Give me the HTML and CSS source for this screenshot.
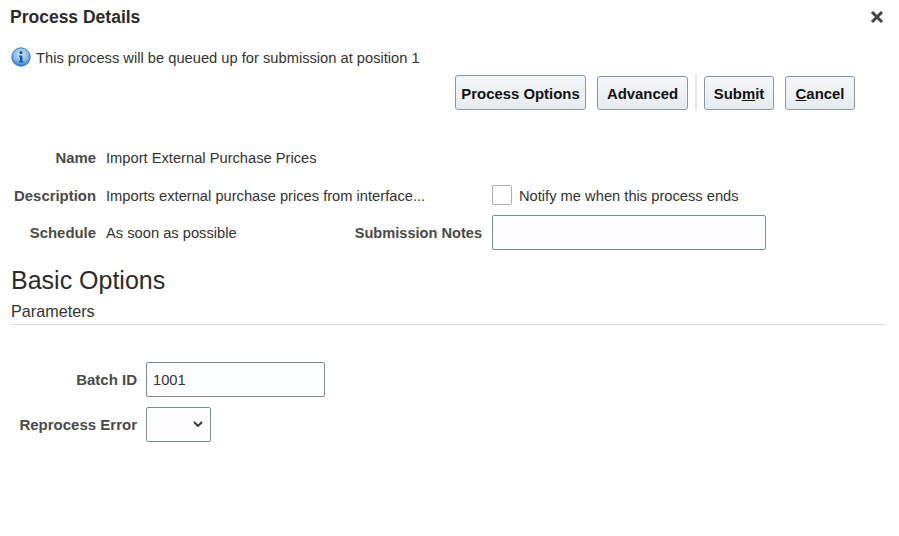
FILE: index.html
```html
<!DOCTYPE html>
<html lang="en">
<head>
    <meta charset="UTF-8">
    <meta name="viewport" content="width=device-width, initial-scale=1.0">
    <title>Process Details</title>
    <link rel="stylesheet" href="styles.css">
</head>
<body>
    <div class="dialog-head">
        <h1>Process Details</h1>
        <svg class="close" width="14" height="14" viewBox="0 0 14 14">
            <path d="M2 2 L12 12 M12 2 L2 12" stroke="#444" stroke-width="3" fill="none"/>
        </svg>
    </div>

    <div class="info">
        <svg width="20" height="20" viewBox="0 0 20 20">
            <defs>
                <radialGradient id="infoFill" cx="50%" cy="35%" r="65%">
                    <stop offset="0" stop-color="#d8ebfb"/>
                    <stop offset="0.6" stop-color="#86bbec"/>
                    <stop offset="1" stop-color="#2f78c8"/>
                </radialGradient>
            </defs>
            <circle cx="10" cy="10" r="9.2" fill="url(#infoFill)" stroke="#3a7cc4" stroke-width="1"/>
            <circle cx="10" cy="5.6" r="1.6" fill="#1b56a8"/>
            <path d="M8 8.4 H11.4 V14 H12.4 V15.4 H7.8 V14 H8.9 V9.8 H8 Z" fill="#1b56a8"/>
        </svg>
        <span class="nudge">This process will be queued up for submission at position 1</span>
    </div>

    <div class="toolbar">
        <button class="options">Process Options</button>
        <button class="advanced">Advanced</button>
        <span class="divider"></span>
        <button class="submit">Sub<u>m</u>it</button>
        <button class="cancel"><u>C</u>ancel</button>
    </div>

    <div class="details">
        <label class="row-name">Name</label>
        <div class="wide row-name">Import External Purchase Prices</div>

        <label class="row-desc nudge">Description</label>
        <div class="wide row-desc nudge">Imports external purchase prices from interface...</div>
        <div class="notify row-desc"><span class="checkbox"></span><span class="nudge">Notify me when this process ends</span></div>

        <label class="row-sched">Schedule</label>
        <div class="row-sched">As soon as possible</div>
        <label class="row-sched notes-label">Submission Notes</label>
        <input class="notes row-sched" type="text">
    </div>

    <h2>Basic Options</h2>
    <div class="section">Parameters</div>

    <div class="params">
        <label>Batch ID</label>
        <input class="batch" type="text" value="1001">
        <label>Reprocess Error</label>
        <div class="select">
            <svg width="10" height="7" viewBox="0 0 10 7">
                <path d="M1 1 L5 5 L9 1" stroke="#333" stroke-width="1.8" fill="none"/>
            </svg>
        </div>
    </div>
</body>
</html>
```

FILE: styles.css
```css
* {
    box-sizing: border-box;
    margin: 0;
    padding: 0;
}
body {
    font-family: "Liberation Sans", Arial, sans-serif;
    font-size: 14.7px;
    color: #333;
    background: white;
    height: 536px;
    overflow: hidden;
}
.dialog-head {
    display: flex;
    justify-content: space-between;
    align-items: center;
    padding: 7px 15px 0 10px;
    height: 27px;
}
h1 {
    font-size: 17.5px;
    font-weight: bold;
    color: #2b2b2b;
}
.info {
    display: flex;
    align-items: center;
    gap: 5px;
    margin-top: 20px;
    padding-left: 11px;
    height: 20px;
}
.nudge {
    padding-top: 2px;
}
.toolbar {
    display: flex;
    justify-content: flex-end;
    align-items: flex-end;
    padding-right: 44px;
    margin-top: 8px;
}
button {
    font-family: inherit;
    font-size: 14.9px;
    font-weight: bold;
    color: #111;
    height: 34px;
    padding-top: 2px;
    background: linear-gradient(to bottom, #f4f7f9, #e6ebef);
    border: 1px solid #8b98a3;
    border-radius: 3px;
}
.options {
    width: 131px;
    height: 35px;
}
.advanced {
    width: 91px;
    margin-left: 11px;
}
.submit {
    width: 70px;
}
.cancel {
    width: 70px;
    margin-left: 11px;
}
.divider {
    width: 2px;
    height: 35px;
    background: #e2e4e6;
    margin: 0 7px 0 7px;
}
.details {
    display: grid;
    grid-template-columns: 96px 238px 128px auto;
    grid-template-rows: 34px 20px 35px;
    column-gap: 10px;
    row-gap: 10px;
    align-items: center;
    margin-top: 31px;
}
label {
    font-size: 14.9px;
    font-weight: bold;
    color: #4a4a4a;
    text-align: right;
    white-space: nowrap;
}
.notes-label {
    font-size: 14.6px;
}
.row-name {
    grid-row: 1;
}
.row-desc {
    grid-row: 2;
}
.row-sched {
    grid-row: 3;
}
.wide {
    grid-column: 2 / 4;
}
.notify {
    display: flex;
    align-items: center;
    gap: 7px;
}
.checkbox {
    width: 20px;
    height: 20px;
    background: white;
    border: 1px solid #a9aeb2;
    border-radius: 2px;
}
input {
    font-family: inherit;
    font-size: 14.7px;
    color: #333;
    background: #fbfdff;
    border: 1px solid #7f8a92;
    border-radius: 2px;
    padding: 0 6px;
}
.notes {
    width: 274px;
    height: 35px;
}
h2 {
    font-size: 25px;
    font-weight: normal;
    color: #2b2b2b;
    margin: 16px 0 0 11px;
    line-height: 28px;
}
.section {
    font-size: 16.2px;
    margin: 9px 13px 0 11px;
    padding-bottom: 4px;
    border-bottom: 1px solid #dcdcdc;
    line-height: 17px;
}
.params {
    display: grid;
    grid-template-columns: 137px auto;
    column-gap: 9px;
    row-gap: 10px;
    align-items: center;
    justify-content: start;
    margin-top: 37px;
}
.params label {
    font-size: 15px;
}
.batch {
    width: 179px;
    height: 35px;
}
.select {
    width: 65px;
    height: 35px;
    display: flex;
    align-items: center;
    justify-content: flex-end;
    padding-right: 7px;
    background: #fbfdff;
    border: 1px solid #7f8a92;
    border-radius: 2px;
}
```
